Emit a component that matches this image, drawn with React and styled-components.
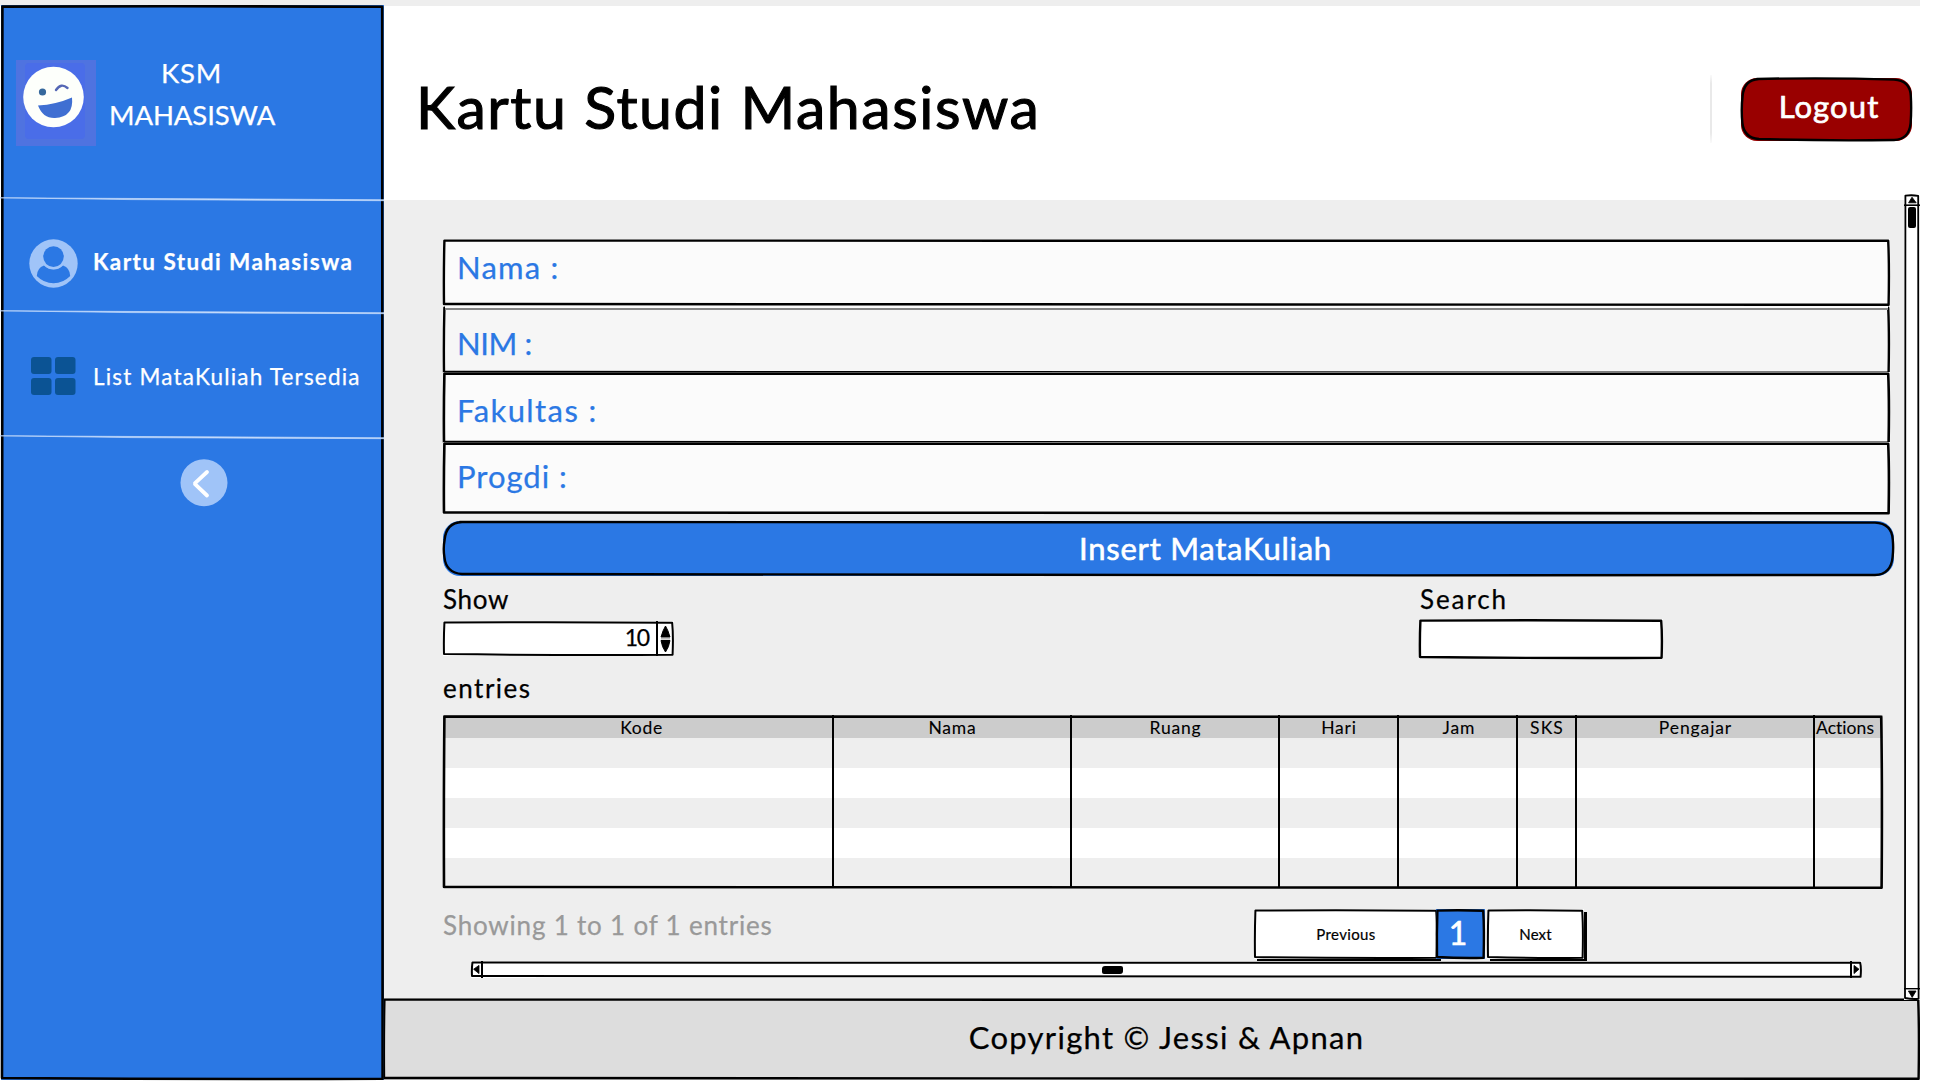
import React from "react";
import styled, { createGlobalStyle } from "styled-components";

const blue = "#2b78e4";

const GlobalStyle = createGlobalStyle`
  *, *::before, *::after { box-sizing: border-box; }
  body { margin: 0; background: #fff; font-family: Lato, "Open Sans", sans-serif; color: #000; }
  button, input { font-family: inherit; }
`;

/* ---------- hand-drawn outline ---------- */

const Outline = styled.svg`
  position: absolute;
  inset: 0;
  width: 100%;
  height: ${(p) => p.$h}px;
  overflow: visible;
  pointer-events: none;
`;

function Sketch({ w, h, r = 0, color = "#000", sw = 2.4 }) {
  const d = r
    ? `M${r - 2} 1 Q${w / 2} -0.6 ${w - r} 1.6 Q${w - 2} 2.4 ${w - 1.2} ${r} Q${w - 0.4} ${h / 2} ${w - 1.4} ${h - r}
       Q${w - 3} ${h - 1.4} ${w - r} ${h - 1} Q${w / 2} ${h} ${r} ${h - 2} Q3 ${h - 3} 1.4 ${h - r} Q0 ${h / 2} 1.6 ${r} Q3 1.8 ${r} 1 Z`
    : `M1.4 1.6 Q${w / 2} 0.8 ${w - 1.8} 1.8 Q${w - 0.6} ${h * 0.4} ${w - 1.4} ${h - 1.2} Q${w / 2} ${h - 0.6} 1 ${h - 2} Q0.6 ${h / 2} 1.4 1.6 Z`;
  return (
    <Outline $h={h} viewBox={`0 0 ${w} ${h}`} preserveAspectRatio="none">
      <path d={d} fill="none" stroke={color} strokeWidth={sw} strokeLinejoin="round" />
    </Outline>
  );
}

const Text = styled.span`
  display: block;
  white-space: pre;
  font-size: ${(p) => p.$size}px;
  line-height: ${(p) => p.$line || Math.round(p.$size * 1.2)}px;
  letter-spacing: ${(p) => p.$spacing || 0}px;
  font-weight: ${(p) => p.$weight || 400};
  color: ${(p) => p.$color || "inherit"};
  -webkit-text-stroke: ${(p) => p.$ink ?? 0.25}px currentColor;
`;

/* ---------- page ---------- */

const Page = styled.div`
  display: grid;
  grid-template-columns: 384px 1536px;
  width: 1920px;
  height: 1081px;
  overflow: hidden;
  background: linear-gradient(#eeeeee 6px, #ffffff 6px);
`;

/* ---------- sidebar ---------- */

const Sidebar = styled.aside`
  position: relative;
  display: flex;
  flex-direction: column;
  width: 383px;
  height: 1075px;
  margin: 5px 0 0 1px;
  background: ${blue};
  color: #fff;
  z-index: 1;
`;

const Brand = styled.div`
  display: flex;
  height: 194px;
  padding: 47px 0 0 15px;
  & > svg { margin-top: 8px; }
`;

const BrandName = styled.div`
  width: 165px;
  margin-left: 13px;
  text-align: center;
`;

const NavItem = styled.a`
  position: relative;
  display: flex;
  align-items: center;
  height: ${(p) => p.$height}px;
  padding: ${(p) => p.$top}px 0 0 ${(p) => p.$left}px;
  & > svg { flex: none; }
`;

const NavText = styled(Text)`
  margin: ${(p) => p.$shift || 0}px 0 0 ${(p) => p.$gap}px;
`;

const Rule = styled.svg`
  position: absolute;
  left: -1px;
  top: -2.5px;
  width: 384px;
  height: 5px;
`;

const Collapse = styled.div`
  position: relative;
  display: flex;
  height: 100px;
  padding: 22px 0 0 179px;
`;

function Divider() {
  return (
    <Rule viewBox="0 0 384 5">
      <path d="M0 0.8 L384 2.7 L384 3.7 L130 2.6 Z" fill="#c3dafa" stroke="#c3dafa" strokeWidth="0.7" />
    </Rule>
  );
}

function Smiley() {
  return (
    <svg width="80" height="86" viewBox="0 0 80 86">
      <rect width="80" height="86" fill="#4f73e0" />
      <rect x="9" y="3" width="60" height="76" rx="4" fill="#4a6de8" />
      <circle cx="37.5" cy="37" r="30.3" fill="#fdfffb" />
      <circle cx="26.5" cy="32" r="3.6" fill="#35689c" />
      <path d="M40 30 Q45 22.5 51.5 28" fill="none" stroke="#5567b5" strokeWidth="2.4" strokeLinecap="round" />
      <path d="M22 45.5 Q40 44.5 56 37.5 Q58 57 39 58 Q27 58.5 22 45.5 Z" fill="#3f6fd2" />
    </svg>
  );
}

function UserIcon() {
  return (
    <svg width="49" height="49" viewBox="0 0 49 49">
      <circle cx="24.5" cy="24.5" r="24.2" fill="#a0c4f8" />
      <path d="M15 26.5 Q8 29 7.8 37 Q15 44.3 24.5 44.3 Q34 44.3 41.2 37 Q41 29 34 26.5 Q30 30.5 24.5 30.5 Q19 30.5 15 26.5 Z" fill={blue} />
      <circle cx="24.5" cy="18" r="12.2" fill="#a0c4f8" />
      <circle cx="24.5" cy="17.6" r="10.3" fill={blue} />
    </svg>
  );
}

function GridIcon() {
  return (
    <svg width="47" height="40" viewBox="0 0 47 40" fill="#0b5394">
      <rect x="1" y="1" width="20.5" height="17" rx="3" />
      <rect x="25" y="1" width="20.5" height="17" rx="3" />
      <rect x="1" y="22" width="20.5" height="17" rx="3" />
      <rect x="25" y="22" width="20.5" height="17" rx="3" />
    </svg>
  );
}

function CollapseIcon() {
  return (
    <svg width="48" height="48" viewBox="0 0 48 48">
      <circle cx="24" cy="23.7" r="23.5" fill="#a0c4f8" />
      <path d="M27 13 L14.5 24.7 L27 36.5" fill="none" stroke="#fff" strokeWidth="3.8" strokeLinejoin="bevel" strokeLinecap="round" />
    </svg>
  );
}

/* ---------- header ---------- */

const Main = styled.main`
  display: flex;
  flex-direction: column;
  padding-top: 6px;
`;

const Header = styled.header`
  display: flex;
  align-items: center;
  height: 194px;
  padding: 0 8px 0 32px;
  background: #fff;
`;

const Title = styled.h1`
  flex: 1;
  margin: 7px 0 0;
  font-weight: 400;
`;

const Separator = styled.div`
  width: 2px;
  height: 68px;
  margin: 12px 29px 0 0;
  background: linear-gradient(#fafafa, #e9e9e9 12%, #e9e9e9 85%, #fafafa);
`;

const SketchButton = styled.button`
  position: relative;
  display: flex;
  align-items: center;
  justify-content: center;
  flex: none;
  width: ${(p) => p.$w}px;
  height: ${(p) => p.$h}px;
  margin: ${(p) => p.$margin || 0};
  padding: ${(p) => p.$pad || 0};
  border: 0;
  border-radius: ${(p) => p.$radius || 0}px;
  background: ${(p) => p.$bg};
  color: ${(p) => p.$fg || "#fff"};
  box-shadow: ${(p) => p.$shadow || "none"};
`;

/* ---------- content ---------- */

const Content = styled.section`
  display: flex;
  height: 798px;
  background: #eeeeee;
`;

const Body = styled.div`
  width: 1520px;
  padding: 39px 0 0 59px;
`;

const Field = styled.div`
  position: relative;
  width: 1447px;
  height: ${(p) => p.$h}px;
  padding: ${(p) => p.$top}px 0 0 14px;
  background: ${(p) => p.$bg || "#fbfbfb"};
`;

const SoftTop = styled.div`
  position: absolute;
  left: 2px;
  right: 2px;
  top: 0;
  height: 4px;
  background: linear-gradient(#fbfbfb 2px, #858585 2px);
`;

const Controls = styled.div`
  display: grid;
  grid-template-columns: 977px 1fr;
  height: 139px;
  padding-top: 7px;
`;

const Spinner = styled.div`
  position: relative;
  display: flex;
  width: 231px;
  height: 35px;
  margin: 6px 0 16px;
  background: #fff;
`;

const SpinnerValue = styled.div`
  display: flex;
  align-items: center;
  justify-content: flex-end;
  width: 215px;
  padding: 0 7px 3px 0;
  border-right: 2px solid #000;
`;

const SearchBox = styled.div`
  position: relative;
  width: 244px;
  height: 40px;
  margin: 4px 0 0 -1px;
  background: #fff;
`;

const Table = styled.div`
  position: relative;
  width: 1440px;
  height: 174px;
  background: repeating-linear-gradient(#eeeeee 0 30px, #ffffff 30px 60px) 0 23px no-repeat;
`;

const Columns = styled.div`
  display: grid;
  grid-template-columns: 391px 238px 208px 119px 119px 59px 238px 68px;
  height: 173px;
`;

const Column = styled.div`
  border-right: ${(p) => (p.$last ? 0 : 2)}px solid #000;
`;

const HeadCell = styled.div`
  display: flex;
  justify-content: center;
  height: 23px;
  padding: 2px ${(p) => (p.$tight ? 8 : 0)}px 0 ${(p) => (p.$tight ? 0 : p.$nudge || 1)}px;
  background: #cccccc;
`;

const TableFooter = styled.div`
  display: flex;
  height: 72px;
  padding-top: 20px;
`;

const Status = styled.div`
  width: 811px;
  padding-top: 1px;
`;

const HScroll = styled.div`
  position: relative;
  display: flex;
  justify-content: space-between;
  align-items: center;
  width: 1391px;
  height: 17px;
  margin-left: 28px;
  background: #fff;
`;

const HThumb = styled.div`
  width: 21px;
  height: 8px;
  margin-right: 109px;
  border-radius: 3px 2px 3px 2px;
  background: #000;
`;

const VScroll = styled.div`
  position: relative;
  display: flex;
  flex-direction: column;
  justify-content: space-between;
  align-items: center;
  width: 16px;
  height: 806px;
  margin-top: -6px;
  background: #fff;
  z-index: 1;
`;

const TopCap = styled.div`
  display: flex;
  flex-direction: column;
  align-items: center;
`;

const VThumb = styled.div`
  width: 8px;
  height: 21px;
  margin-top: 1px;
  border-radius: 2px;
  background: #000;
`;

const Footer = styled.footer`
  position: relative;
  display: flex;
  align-items: center;
  justify-content: center;
  height: 82px;
  margin-left: -1px;
  padding: 0 0 3px 30px;
  background: #dddddd;
`;

const columns = [
  { name: "Kode", spacing: 0.7, nudge: 8 },
  { name: "Nama", spacing: 0.8 },
  { name: "Ruang", spacing: 0.8 },
  { name: "Hari", spacing: 0.8 },
  { name: "Jam", spacing: 0.9, nudge: 3 },
  { name: "SKS", spacing: 1.1 },
  { name: "Pengajar", spacing: 0.9 },
  { name: "Actions", spacing: 0.05, tight: true },
];

function SpinnerArrows() {
  return (
    <svg width="15" height="35" viewBox="0 0 15 35">
      <path d="M7.5 5 Q10 9 12 16 L3 16 Q5 9 7.5 5 Z M3 19.5 L12 19.5 Q11 26 7.5 31 Q4 26 3 19.5 Z" stroke="#000" strokeWidth="1" />
      <path d="M3 17.8 H12" stroke="#bbb" strokeWidth="1.5" />
    </svg>
  );
}

function ArrowCap({ direction, w, h }) {
  const arrows = {
    up: "M8 3.2 L12.2 8.8 L4.6 8.8 Z",
    down: "M4.4 3 L12 3 L8.2 9.4 Z",
    left: "M2.6 8.2 L8 4.4 L8 12.6 Z",
    right: "M4 4.4 L9 8.2 L4 12.6 Z",
  };
  const edges = {
    up: `M0 ${h - 0.6} H${w}`,
    down: `M0 0.4 H${w}`,
    left: `M${w - 1} 0 V${h}`,
    right: `M1 0 V${h}`,
  };
  return (
    <svg width={w} height={h} viewBox={`0 0 ${w} ${h}`}>
      <path d={arrows[direction]} stroke="#000" strokeWidth="0.8" strokeLinejoin="round" />
      <path d={edges[direction]} stroke="#000" strokeWidth="2" />
    </svg>
  );
}

export default function App() {
  return (
    <Page>
      <GlobalStyle />
      <Sidebar>
        <Sketch w={383} h={1075} sw={2.6} />
        <Brand>
          <Smiley />
          <BrandName>
            <Text $size={27.5} $line={42} $spacing={0.8}>KSM</Text>
            <Text $size={27.5} $line={42} $spacing={-0.1}>MAHASISWA</Text>
          </BrandName>
        </Brand>
        <NavItem $height={113} $top={15} $left={28}>
          <Divider />
          <UserIcon />
          <NavText $size={22.5} $spacing={1.45} $weight={700} $shift={-3} $gap={15}>Kartu Studi Mahasiswa</NavText>
        </NavItem>
        <NavItem $height={125} $top={3} $left={29}>
          <Divider />
          <GridIcon />
          <NavText $size={22.5} $spacing={1.2} $gap={16}>List MataKuliah Tersedia</NavText>
        </NavItem>
        <Collapse>
          <Divider />
          <CollapseIcon />
        </Collapse>
      </Sidebar>

      <Main>
        <Header>
          <Title>
            <Text $size={59} $spacing={1.55} $ink={1.1}>Kartu Studi Mahasiswa</Text>
          </Title>
          <Separator />
          <SketchButton $w={171} $h={63} $radius={16} $bg="#990000" $pad="0 0 6px 5px" $margin="12px 0 0">
            <Text $size={31} $spacing={1.1} $ink={0.7}>Logout</Text>
            <Sketch w={171} h={63} r={18} />
          </SketchButton>
        </Header>

        <Content>
          <Body>
            <Field $h={67} $top={10}>
              <Text $size={31} $spacing={1.2} $color={blue}>Nama :</Text>
              <Sketch w={1447} h={67} />
            </Field>
            <Field $h={66} $top={19} $bg="#f6f6f6">
              <Text $size={31} $spacing={-0.4} $color={blue}>NIM :</Text>
              <Sketch w={1447} h={68} />
              <SoftTop />
            </Field>
            <Field $h={70} $top={20}>
              <Text $size={31} $spacing={1.4} $color={blue}>Fakultas :</Text>
              <Sketch w={1447} h={72} sw={2.6} />
            </Field>
            <Field $h={72} $top={16}>
              <Text $size={31} $spacing={1} $color={blue}>Progdi :</Text>
              <Sketch w={1447} h={72.5} sw={2.6} />
            </Field>

            <SketchButton $w={1451} $h={55} $radius={17} $bg={blue} $pad="0 0 0 74px" $margin="7px 0 0">
              <Text $size={31} $spacing={0.75} $ink={0.6}>Insert MataKuliah</Text>
              <Sketch w={1451} h={55} r={19} />
            </SketchButton>

            <Controls>
              <div>
                <Text $size={26} $line={32} $spacing={0.7}>Show</Text>
                <Spinner>
                  <SpinnerValue>
                    <Text $size={23} $spacing={-1.2}>10</Text>
                  </SpinnerValue>
                  <SpinnerArrows />
                  <Sketch w={231} h={35} sw={2} />
                </Spinner>
                <Text $size={26} $line={32} $spacing={1.5}>entries</Text>
              </div>
              <div>
                <Text $size={26} $line={32} $spacing={1.9}>Search</Text>
                <SearchBox>
                  <Sketch w={244} h={40} />
                </SearchBox>
              </div>
            </Controls>

            <Table>
              <Columns>
                {columns.map((c, i) => (
                  <Column key={c.name} $last={i === columns.length - 1}>
                    <HeadCell $tight={c.tight} $nudge={c.nudge}>
                      <Text $size={17.5} $spacing={c.spacing} $ink={0.1}>{c.name}</Text>
                    </HeadCell>
                  </Column>
                ))}
              </Columns>
              <Sketch w={1440} h={174} sw={2.6} />
            </Table>

            <TableFooter>
              <Status>
                <Text $size={26} $spacing={0.8} $color="#999999">Showing 1 to 1 of 1 entries</Text>
              </Status>
              <SketchButton $w={184} $h={50} $bg="#fff" $fg="#000" $shadow="3px 3px 0 #000">
                <Text $size={15} $spacing={0.35} $ink={0.2}>Previous</Text>
                <Sketch w={184} h={50} sw={2} />
              </SketchButton>
              <SketchButton $w={49} $h={50} $bg={blue} $pad="0 5px 2px 0" $margin="0 0 0 -2px">
                <Text $size={32} $ink={0.6}>1</Text>
                <Sketch w={49} h={50} />
              </SketchButton>
              <SketchButton $w={97} $h={50} $bg="#fff" $fg="#000" $shadow="3px 3px 0 #000" $margin="0 0 0 2px">
                <Text $size={15} $spacing={0.1} $ink={0.2}>Next</Text>
                <Sketch w={97} h={50} sw={2} />
              </SketchButton>
            </TableFooter>

            <HScroll>
              <ArrowCap direction="left" w={12} h={17} />
              <HThumb />
              <ArrowCap direction="right" w={12} h={17} />
              <Sketch w={1391} h={17} sw={2} />
            </HScroll>
          </Body>
          <VScroll>
            <TopCap>
              <ArrowCap direction="up" w={16} h={12} />
              <VThumb />
            </TopCap>
            <ArrowCap direction="down" w={16} h={12} />
            <Sketch w={16} h={806} sw={1.8} />
          </VScroll>
        </Content>

        <Footer>
          <Text $size={31} $spacing={1.3}>Copyright © Jessi & Apnan</Text>
          <Sketch w={1537} h={82} />
        </Footer>
      </Main>
    </Page>
  );
}
